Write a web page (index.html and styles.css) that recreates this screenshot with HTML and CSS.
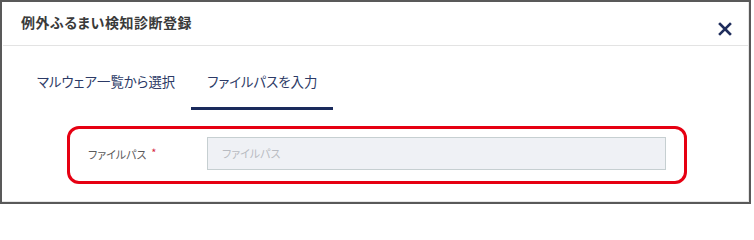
FILE: index.html
```html
<!DOCTYPE html>
<html lang="ja">
<head>
<meta charset="utf-8">
<title>例外ふるまい検知診断登録</title>
<link rel="stylesheet" href="styles.css">
</head>
<body>
<div class="dialog">
  <div class="header">
    <div class="title">例外ふるまい検知診断登録</div>
    <button class="close" aria-label="close">
      <svg width="14" height="14" viewBox="0 0 14 14"><path d="M2 2 L12 12 M12 2 L2 12" stroke="#1f2d5c" stroke-width="2.6" stroke-linecap="square" fill="none"/></svg>
    </button>
  </div>
  <div class="tabs">
    <div class="tab">マルウェア一覧から選択</div>
    <div class="tab active">ファイルパスを入力</div>
  </div>
  <div class="highlight">
    <div class="field">
      <div class="label">ファイルパス<span class="req">*</span></div>
      <div class="input">ファイルパス</div>
    </div>
  </div>
</div>
</body>
</html>
```
FILE: styles.css
```css
* { box-sizing: border-box; }
html, body { margin: 0; padding: 0; background: #fff; }
body {
  font-family: "Noto Sans CJK JP", "Noto Sans", sans-serif;
  font-feature-settings: "palt";
  width: 754px;
  height: 204px;
  overflow: hidden;
}
.dialog {
  width: 751px;
  height: 204px;
  border: 2px solid #595959;
  box-shadow: inset 0 -1px 0 #e6e6e6, inset -1px 0 0 #e6e6e6;
  background: #fff;
}
.header {
  display: flex;
  justify-content: space-between;
  align-items: flex-start;
  height: 44px;
  padding: 10px 18px 0 18px;
  border-bottom: 1px solid #e3e3e3;
  margin: 0 1px;
}
.title {
  font-size: 14px;
  line-height: 20px;
  font-weight: 700;
  color: #3a3a3a;
  letter-spacing: 0.5px;
}
.close {
  margin-top: 10px;
  margin-right: -2px;
  padding: 0;
  border: 0;
  background: none;
  width: 14px;
  height: 14px;
  display: block;
}
.close svg { display: block; }
.tabs {
  display: flex;
  padding-left: 19px;
}
.tab {
  font-size: 13.4px;
  line-height: 19px;
  color: #2c3a66;
  padding: 26px 16px 16px;
  border-bottom: 3px solid transparent;
}
.tab.active {
  border-bottom-color: #1a2a5c;
}
.highlight {
  margin: 16px 0 0 65px;
  width: 620px;
  height: 58px;
  border: 3px solid #e60012;
  border-radius: 12px;
  padding: 8px 18px 0 18px;
}
.field {
  display: flex;
  align-items: center;
}
.label {
  width: 119px;
  font-size: 11px;
  color: #5a5a5a;
  display: flex;
  align-items: center;
}
.req {
  color: #d6283d;
  font-size: 11px;
  margin-left: 5px;
  position: relative;
  top: -2px;
}
.input {
  width: 459px;
  height: 33px;
  background: #eff1f5;
  border: 1px solid #c6cfd1;
  font-size: 11px;
  line-height: 31px;
  color: #b8bbc1;
  padding-left: 14px;
}
```
